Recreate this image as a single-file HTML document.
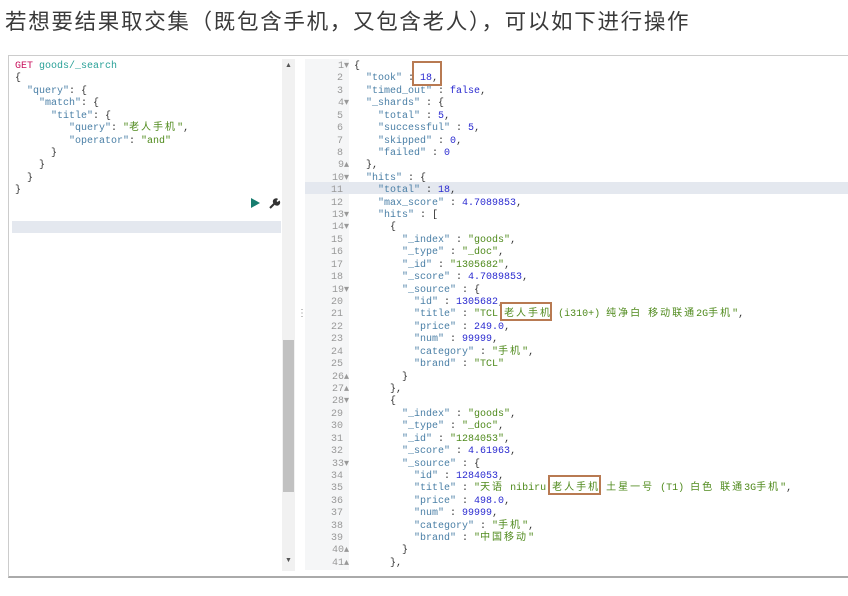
<!DOCTYPE html>
<html><head><meta charset="utf-8"><style>
body{margin:0;width:848px;height:596px;background:#fff;overflow:hidden;position:relative;font-family:"Liberation Sans","Noto Sans CJK SC",sans-serif}
.t{position:absolute;left:5px;top:5px;font-size:21.5px;color:#3a3a3a;white-space:nowrap;letter-spacing:1.7px}
.frame{position:absolute;left:8px;top:55px;width:850px;height:523px;border:1px solid #ccc;border-bottom:2px solid #aaa;box-sizing:border-box;background:#fff}
.code{position:absolute;font-family:"Liberation Mono","Noto Sans CJK SC",monospace;font-size:10px;line-height:12.42px;white-space:pre;color:#333}
.k{color:#4a7fa6}.s{color:#4f8a1c}.n{color:#2a2ad0}.g{color:#c8115c}.u{color:#2aa198}
.c{letter-spacing:2px}
.ln{position:absolute;left:305px;width:44px;top:61px;font-family:"Liberation Mono",monospace;font-size:10px;line-height:12.42px;color:#999;text-align:right;white-space:pre;height:509px}
.box{position:absolute;border:2px solid #b87a52;box-sizing:border-box}
</style></head><body>
<div class="t">若想要结果取交集（既包含手机，又包含老人），可以如下进行操作</div>
<div class="frame"></div>
<div style="position:absolute;left:305px;top:59px;width:44px;height:511px;background:#f5f6f7"></div>
<!-- left panel -->
<div style="position:absolute;left:12px;top:221px;width:269px;height:12px;background:#e4e8ef"></div>
<div style="position:absolute;left:282px;top:59px;width:13px;height:512px;background:#f1f1f1"></div>
<div style="position:absolute;left:283px;top:340px;width:11px;height:152px;background:#c1c1c1"></div>
<div style="position:absolute;left:285px;top:62px;font-size:7px;color:#555">▲</div>
<div style="position:absolute;left:285px;top:557px;font-size:7px;color:#555">▼</div>
<div style="position:absolute;left:297px;top:308px;font-size:10px;color:#888">⋮</div>
<div class="code" style="left:15px;top:61px"><span class="g">GET</span> <span class="u">goods/_search</span>
{
  <span class="k">"query"</span>: {
    <span class="k">"match"</span>: {
      <span class="k">"title"</span>: {
         <span class="k">"query"</span>: <span class="s">"<span class="c">老人手机</span>"</span>,
         <span class="k">"operator"</span>: <span class="s">"and"</span>
      }
    }
  }
}</div>
<svg style="position:absolute;left:250px;top:197px" width="32" height="12"><polygon points="1,1 10,6 1,11" fill="#167c6e"/><path d="M20,11 L25,6" stroke="#333" stroke-width="2"/><path d="M24,7 a3,3 0 0 1 4,-5 l-1.5,2 1,1 2,-1.5 a3,3 0 0 1 -5,4z" fill="#333"/></svg>
<!-- right panel -->
<div style="position:absolute;left:305px;top:182px;width:543px;height:12px;background:#e4e8ef"></div>
<div class="ln">1▾
2 
3 
4▾
5 
6 
7 
8 
9▴
10▾
11 
12 
13▾
14▾
15 
16 
17 
18 
19▾
20 
21 
22 
23 
24 
25 
26▴
27▴
28▾
29 
30 
31 
32 
33▾
34 
35 
36 
37 
38 
39 
40▴
41▴</div>
<div class="code" style="left:354px;top:61px">{
  <span class="k">"took"</span> : <span class="n">18</span>,
  <span class="k">"timed_out"</span> : <span class="n">false</span>,
  <span class="k">"_shards"</span> : {
    <span class="k">"total"</span> : <span class="n">5</span>,
    <span class="k">"successful"</span> : <span class="n">5</span>,
    <span class="k">"skipped"</span> : <span class="n">0</span>,
    <span class="k">"failed"</span> : <span class="n">0</span>
  },
  <span class="k">"hits"</span> : {
    <span class="k">"total"</span> : <span class="n">18</span>,
    <span class="k">"max_score"</span> : <span class="n">4.7089853</span>,
    <span class="k">"hits"</span> : [
      {
        <span class="k">"_index"</span> : <span class="s">"goods"</span>,
        <span class="k">"_type"</span> : <span class="s">"_doc"</span>,
        <span class="k">"_id"</span> : <span class="s">"1305682"</span>,
        <span class="k">"_score"</span> : <span class="n">4.7089853</span>,
        <span class="k">"_source"</span> : {
          <span class="k">"id"</span> : <span class="n">1305682</span>,
          <span class="k">"title"</span> : <span class="s">"TCL <span class="c">老人手机</span> (i310+) <span class="c">纯净白</span> <span class="c">移动联通</span>2G<span class="c">手机</span>"</span>,
          <span class="k">"price"</span> : <span class="n">249.0</span>,
          <span class="k">"num"</span> : <span class="n">99999</span>,
          <span class="k">"category"</span> : <span class="s">"<span class="c">手机</span>"</span>,
          <span class="k">"brand"</span> : <span class="s">"TCL"</span>
        }
      },
      {
        <span class="k">"_index"</span> : <span class="s">"goods"</span>,
        <span class="k">"_type"</span> : <span class="s">"_doc"</span>,
        <span class="k">"_id"</span> : <span class="s">"1284053"</span>,
        <span class="k">"_score"</span> : <span class="n">4.61963</span>,
        <span class="k">"_source"</span> : {
          <span class="k">"id"</span> : <span class="n">1284053</span>,
          <span class="k">"title"</span> : <span class="s">"<span class="c">天语</span> nibiru <span class="c">老人手机</span> <span class="c">土星一号</span> (T1) <span class="c">白色</span> <span class="c">联通</span>3G<span class="c">手机</span>"</span>,
          <span class="k">"price"</span> : <span class="n">498.0</span>,
          <span class="k">"num"</span> : <span class="n">99999</span>,
          <span class="k">"category"</span> : <span class="s">"<span class="c">手机</span>"</span>,
          <span class="k">"brand"</span> : <span class="s">"<span class="c">中国移动</span>"</span>
        }
      },</div>
<div class="box" style="left:412px;top:61px;width:30px;height:25px"></div>
<div class="box" style="left:500px;top:302px;width:52px;height:19px"></div>
<div class="box" style="left:548px;top:475px;width:53px;height:20px"></div>
</body></html>
